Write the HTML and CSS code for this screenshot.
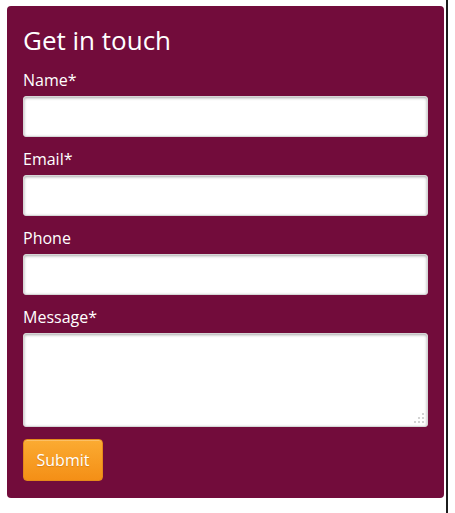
FILE: index.html
```html
<!DOCTYPE html>
<html lang="en">
<head>
<meta charset="utf-8">
<title>Get in touch</title>
<link rel="stylesheet" href="styles.css">
</head>
<body>
<div class="page">
  <form class="card">
    <h2 class="title">Get in touch</h2>
    <label class="label" for="name">Name*</label>
    <input class="field" id="name" type="text">
    <label class="label" for="email">Email*</label>
    <input class="field" id="email" type="text">
    <label class="label" for="phone">Phone</label>
    <input class="field" id="phone" type="text">
    <label class="label" for="msg">Message*</label>
    <div class="area-wrap">
      <textarea class="field area" id="msg"></textarea>
      <svg class="grip" width="14" height="14" viewBox="0 0 14 14">
        <circle cx="11" cy="3" r="1" fill="#c4c4c4"/>
        <circle cx="7" cy="7" r="1" fill="#c4c4c4"/>
        <circle cx="11" cy="7" r="1" fill="#c4c4c4"/>
        <circle cx="3" cy="11" r="1" fill="#c4c4c4"/>
        <circle cx="7" cy="11" r="1" fill="#c4c4c4"/>
        <circle cx="11" cy="11" r="1" fill="#c4c4c4"/>
      </svg>
    </div>
    <div class="actions">
      <button class="submit" type="button">Submit</button>
    </div>
  </form>
</div>
</body>
</html>
```
FILE: styles.css
```css
html, body {
  margin: 0;
  padding: 0;
  background: #fff;
}
body {
  font-family: "Open Sans", "Noto Sans", sans-serif;
}
.page {
  width: 448px;
  min-height: 513px;
  border-right: 2px solid #1c1c1c;
  box-sizing: border-box;
  padding: 6px 0 0 7px;
}
.card {
  width: 437px;
  box-sizing: border-box;
  background: #720c3b;
  border-radius: 4px;
  padding: 16px 16px 17px 16px;
  display: flex;
  flex-direction: column;
}
.title {
  margin: 2px 0 14px 0;
  font-size: 26px;
  line-height: 32px;
  font-weight: 400;
  color: #fff;
}
.label {
  display: block;
  font-size: 16px;
  line-height: 21px;
  color: #fff;
  margin-bottom: 5px;
}
.field {
  display: block;
  width: 100%;
  height: 41px;
  box-sizing: border-box;
  margin: 0 0 12px 0;
  border: 1px solid #d6d6d6;
  border-radius: 3px;
  background: #fff;
  box-shadow: inset 0 1px 3px rgba(0, 0, 0, 0.35);
  font-family: inherit;
  font-size: 15px;
  padding: 6px 8px;
  outline: none;
}
.area-wrap {
  position: relative;
  margin-bottom: 12px;
}
.area {
  height: 94px;
  margin: 0;
  resize: none;
}
.grip {
  position: absolute;
  right: 2px;
  bottom: 2px;
}
.actions {
  display: flex;
}
.submit {
  width: 80px;
  height: 42px;
  border: 1px solid #e4891a;
  border-radius: 4px;
  background: linear-gradient(#fbab32, #f48f16);
  color: #fff;
  font-family: inherit;
  font-size: 16px;
  padding: 0;
  text-shadow: 0 1px 1px rgba(160, 80, 0, 0.35);
  box-shadow: inset 0 1px 0 rgba(255, 255, 255, 0.25);
}
```
